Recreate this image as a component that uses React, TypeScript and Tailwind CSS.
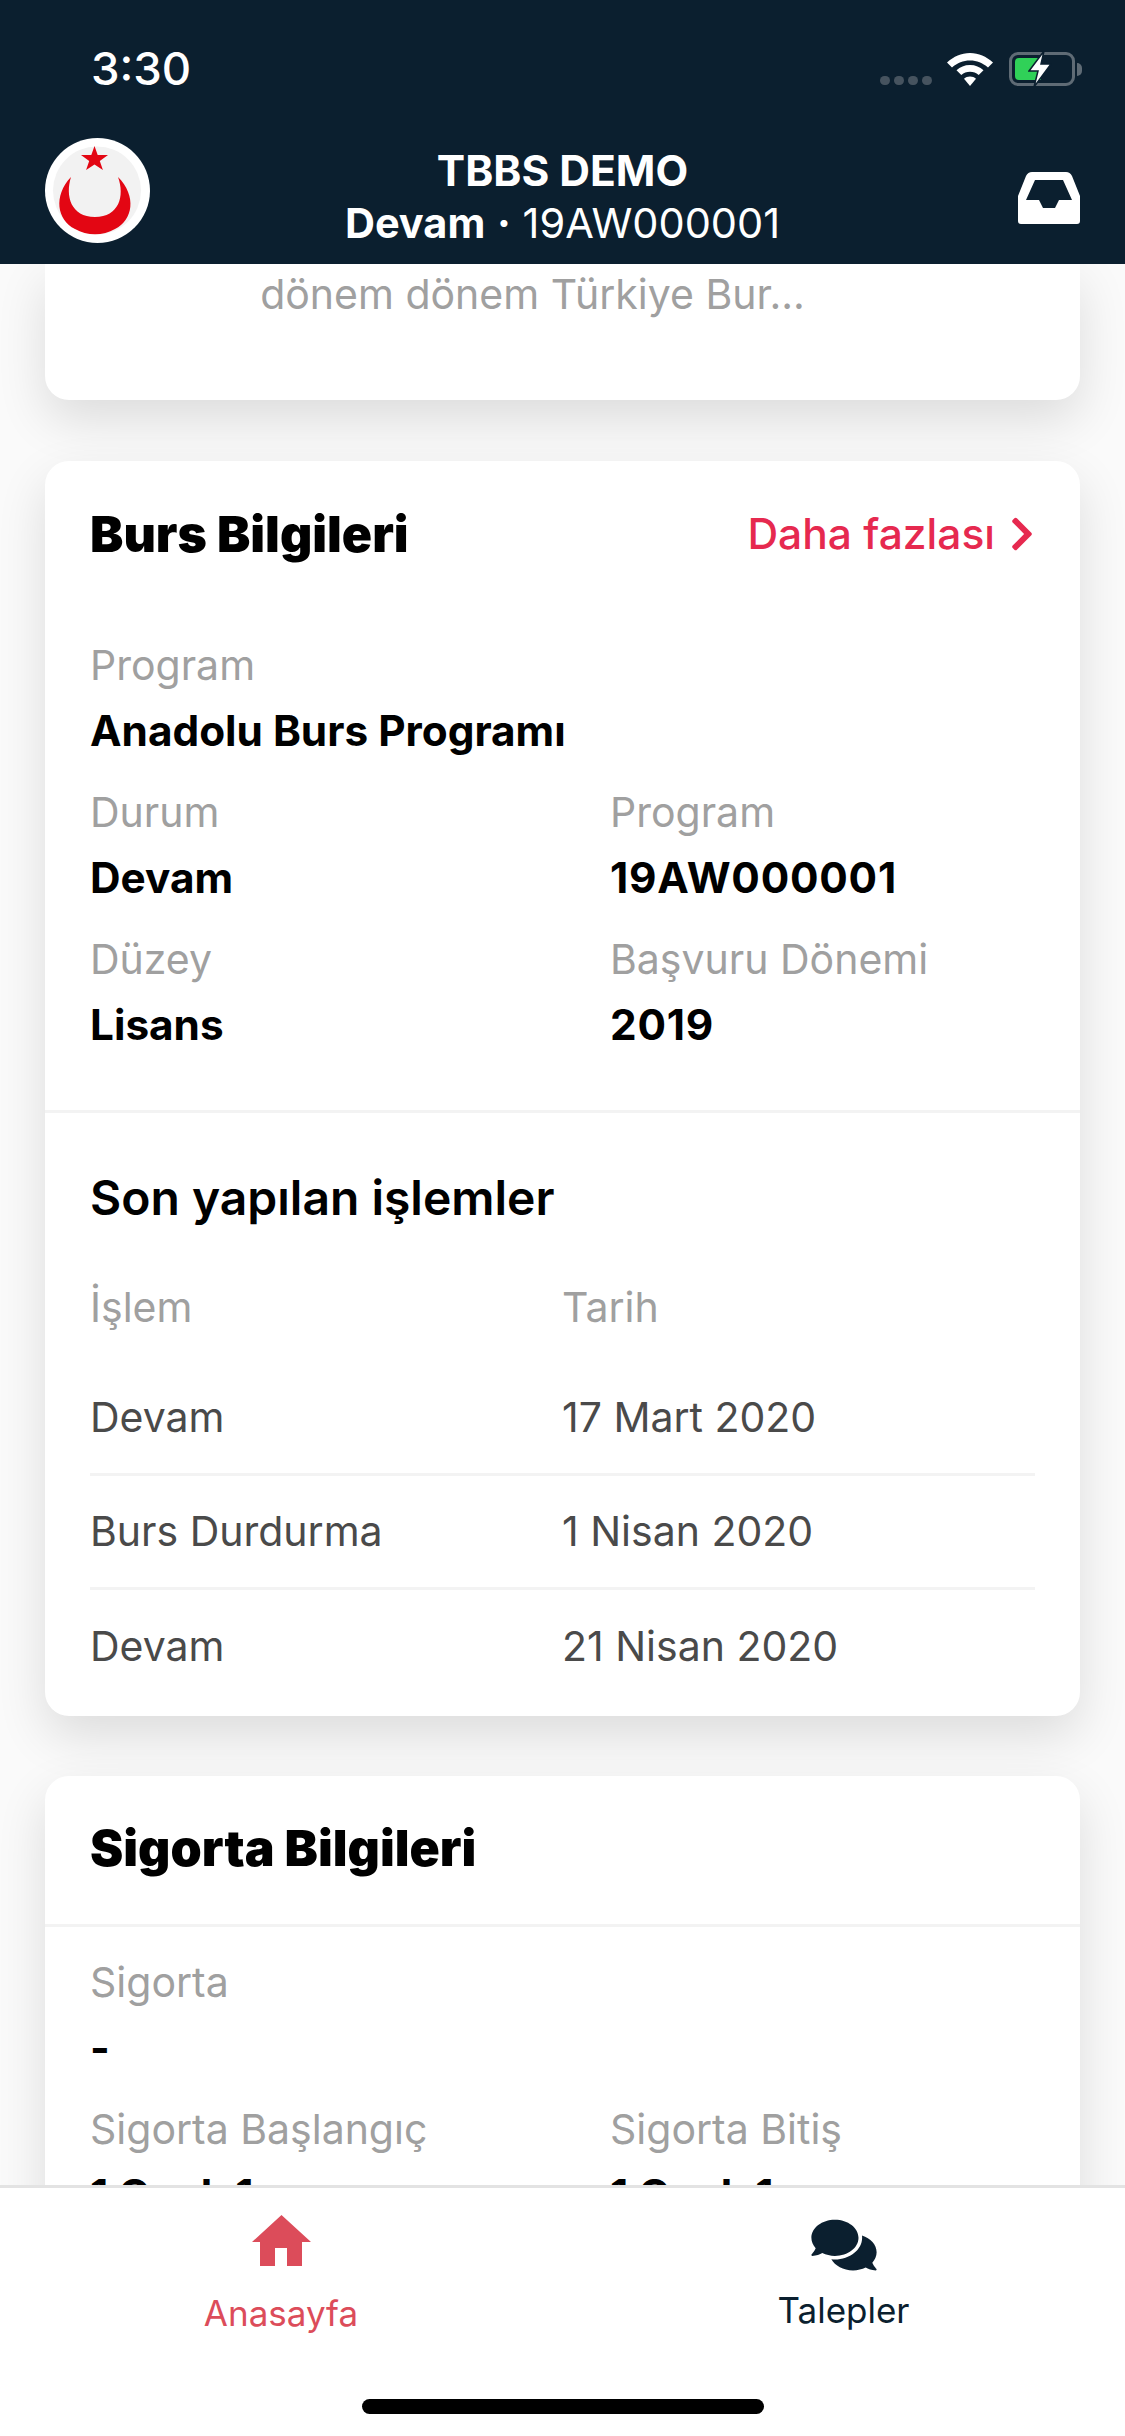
import React from 'react';
import { FaChevronRight, FaComments } from 'react-icons/fa';

const Field: React.FC<{ label: string; value: string; numeric?: boolean }> = ({ label, value, numeric }) => (
    <div className="h-[147px]">
        <div className="text-[41px] leading-[48px] text-[#a0a0a0]">{label}</div>
        <div className={`mt-[18px] text-[42.300px] leading-[48px] font-bold text-black ${numeric ? 'tracking-[0.8px]' : ''}`}>
            {value}
        </div>
    </div>
);

const Row: React.FC<{ name: string; date: string; last?: boolean }> = ({ name, date, last }) => (
    <div className={`flex h-[114px] items-center ${last ? '' : 'border-b-[3px] border-[#f3f3f3]'}`}>
        <div className="w-[472px] text-[41px] text-[#4a4a4a]">{name}</div>
        <div className="text-[41px] text-[#4a4a4a]">{date}</div>
    </div>
);

const LogoMark = () => (
    <svg viewBox="0 0 105 105" className="h-[105px] w-[105px]">
        <circle cx="52.5" cy="52.5" r="52.5" fill="#fff" />
        <circle cx="52" cy="52.5" r="44" fill="#f2f2f2" />
        <polygon
            points="49.500,8 52.700,17 63,17 54.800,23 57.900,32 49.500,26.500 41.100,32 44.200,23 36,17 46.300,17"
            fill="#e30613"
        />
        <path
            d="M26 39 C8 58 12 82 30 91 C42 98 58 98 70 91 C88 82 92 58 73 39 C80 58 74 79 50 79 C26 79 20 58 26 39 Z"
            fill="#e30613"
        />
    </svg>
);

const InboxIcon = () => (
    <svg viewBox="0 0 62 52" className="h-[52px] w-[62px]" fill="#fff" fillRule="evenodd">
        <path d="M14 0 H48 Q52 0 54 4 L62 24 V49 Q62 52 59 52 H3 Q0 52 0 49 V24 L8 4 Q10 0 14 0 Z M17 8 H45 L54 28 H41 L37 36 H25 L21 28 H8 Z" />
    </svg>
);

const HomeIcon = () => (
    <svg viewBox="0 0 59 51" className="h-[51px] w-[59px]" fill="currentColor">
        <path d="M29.500 0 L59 27 H50 V51 H35 V33 H23 V51 H8 V27 H0 Z" />
    </svg>
);

const StatusIcons = () => (
    <div className="flex items-center">
        <div className="mt-[23px] flex gap-[4px]">
            <span className="h-[9px] w-[10px] rounded-full bg-[#46535f]" />
            <span className="h-[9px] w-[10px] rounded-full bg-[#46535f]" />
            <span className="h-[9px] w-[10px] rounded-full bg-[#46535f]" />
            <span className="h-[9px] w-[10px] rounded-full bg-[#46535f]" />
        </div>
        <svg viewBox="0 0 46 33" className="ml-[15px] h-[33px] w-[46px]" fill="#fff">
            <path d="M23 0 C32 0 39 3.500 46 9.500 L41 14.500 C35.500 9.800 30 7.500 23 7.500 C16 7.500 10.500 9.800 5 14.500 L0 9.500 C7 3.500 14 0 23 0 Z" />
            <path d="M23 12 C28.500 12 32.800 14 36.500 17.200 L31.700 22 C29 19.800 26.500 18.800 23 18.800 C19.500 18.800 17 19.800 14.300 22 L9.500 17.200 C13.200 14 17.500 12 23 12 Z" />
            <path d="M23 23.500 C25.500 23.500 27.300 24.300 29 25.700 L23 33 L17 25.700 C18.700 24.300 20.500 23.500 23 23.500 Z" />
        </svg>
        <div className="relative ml-[16px] h-[34px] w-[66px] rounded-[9px] border-[3px] border-[#5f6b75] p-[3px]">
            <div className="h-full w-[26px] rounded-l-[4px] bg-[#30d158]" />
            <svg viewBox="0 0 24 36" className="absolute top-[-4px] left-[16px] h-[36px] w-[24px]">
                <path d="M16 0 L1 20 L10 20 L6 36 L23 13 L13 13 Z" fill="#fff" stroke="#0b1f2f" strokeWidth="1.500" />
            </svg>
            <div className="absolute top-[8px] right-[-10px] h-[13px] w-[5px] rounded-r-full bg-[#5f6b75]" />
        </div>
    </div>
);

export default function App() {
    return (
        <div className="flex h-[2436px] w-[1125px] flex-col overflow-hidden bg-[#fafafa] font-['Inter',sans-serif]">
            <header className="z-10 flex h-[264px] shrink-0 flex-col bg-[#0b1f2f] px-[45px] text-white">
                <div className="flex h-[138px] items-center justify-between pr-[5px]">
                    <span className="ml-[46px] text-[45.500px] font-medium">3:30</span>
                    <StatusIcons />
                </div>
                <div className="flex items-start justify-between">
                    <div className="w-[105px]">
                        <LogoMark />
                    </div>
                    <div className="mt-[6px] text-center leading-[53px]">
                        <div className="text-[42.500px] font-bold">TBBS DEMO</div>
                        <div className="text-[41.500px]">
                            <span className="font-bold">Devam</span> <span className="font-bold">·</span> 19AW000001
                        </div>
                    </div>
                    <div className="mt-[34px] flex w-[105px] justify-end">
                        <InboxIcon />
                    </div>
                </div>
            </header>

            <main className="min-h-0 flex-1 overflow-hidden px-[45px]">
                <section className="h-[136px] rounded-b-[24px] bg-white pt-[6px] text-center text-[41px] leading-[48px] text-[#a0a0a0] shadow-[0_20px_50px_rgba(0,0,0,0.12)]">
                    <div className="-ml-[60px]">dönem dönem Türkiye Bur...</div>
                </section>

                <section className="mt-[61px] rounded-[24px] bg-white shadow-[0_20px_50px_rgba(0,0,0,0.12)]">
                    <div className="border-b-[3px] border-[#f3f3f3] px-[45px] pt-[41px] pb-[28px]">
                        <div className="flex items-center justify-between">
                            <h2 className="text-[50px] leading-[58px] font-black text-black">Burs Bilgileri</h2>
                            <div className="flex items-center gap-[14px] text-[42.500px] font-medium text-[#e6294f]">
                                Daha fazlası
                                <FaChevronRight className="h-[38px] w-[26px]" />
                            </div>
                        </div>
                        <div className="mt-[75px]">
                            <Field label="Program" value="Anadolu Burs Programı" />
                            <div className="grid grid-cols-[520px_1fr]">
                                <Field label="Durum" value="Devam" />
                                <Field label="Program" value="19AW000001" numeric />
                                <Field label="Düzey" value="Lisans" />
                                <Field label="Başvuru Dönemi" value="2019" numeric />
                            </div>
                        </div>
                    </div>
                    <div className="px-[45px] pt-[58px] pb-[12px]">
                        <h3 className="text-[48px] leading-[54px] font-semibold text-black">Son yapılan işlemler</h3>
                        <div className="mt-[58px] flex text-[41px] leading-[48px] text-[#a0a0a0]">
                            <div className="w-[472px]">İşlem</div>
                            <div>Tarih</div>
                        </div>
                        <div className="mt-[31px]">
                            <Row name="Devam" date="17 Mart 2020" />
                            <Row name="Burs Durdurma" date="1 Nisan 2020" />
                            <Row name="Devam" date="21 Nisan 2020" last />
                        </div>
                    </div>
                </section>

                <section className="mt-[60px] rounded-[24px] bg-white shadow-[0_20px_50px_rgba(0,0,0,0.12)]">
                    <div className="border-b-[3px] border-[#f3f3f3] px-[45px] pt-[43px] pb-[47px]">
                        <h2 className="text-[50px] leading-[58px] font-black text-black">Sigorta Bilgileri</h2>
                    </div>
                    <div className="px-[45px] pt-[31px]">
                        <Field label="Sigorta" value="-" />
                        <div className="grid grid-cols-[520px_1fr]">
                            <Field label="Sigorta Başlangıç" value="1 Ocak 1" />
                            <Field label="Sigorta Bitiş" value="1 Ocak 1" />
                        </div>
                    </div>
                </section>
            </main>

            <nav className="relative z-10 flex h-[251px] shrink-0 border-t-[3px] border-[#e3e3e3] bg-white">
                <div className="flex w-[562px] flex-col items-center pt-[27px] text-[#dc4c5a]">
                    <HomeIcon />
                    <span className="mt-[25px] text-[35px] leading-[44px]">Anasayfa</span>
                </div>
                <div className="flex flex-1 flex-col items-center pt-[28px] text-[#0b1f2f]">
                    <FaComments className="h-[58px] w-[68px]" />
                    <span className="mt-[14px] text-[35px] leading-[44px]">Talepler</span>
                </div>
                <div className="absolute bottom-[22px] left-[362px] h-[15px] w-[402px] rounded-full bg-black" />
            </nav>
        </div>
    );
}
